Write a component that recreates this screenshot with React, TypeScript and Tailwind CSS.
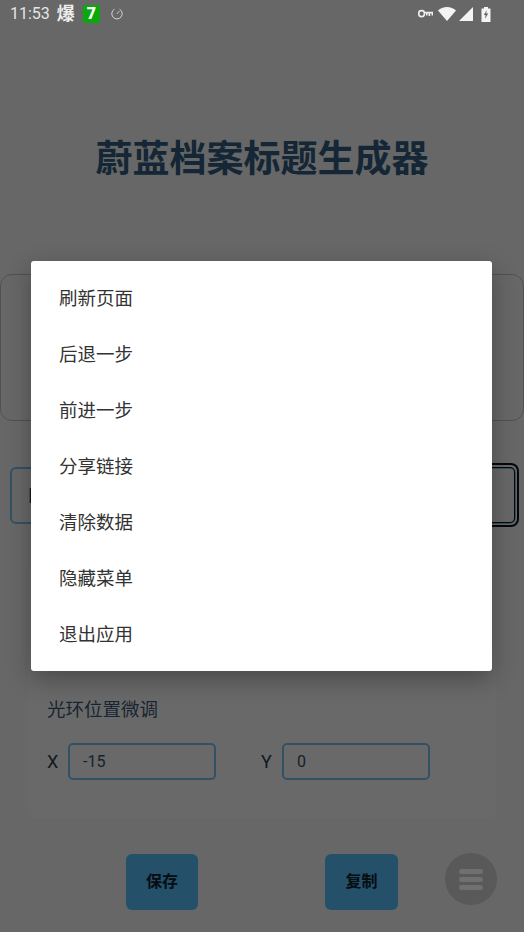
const menuItems = ['刷新页面', '后退一步', '前进一步', '分享链接', '清除数据', '隐藏菜单', '退出应用']

const cjk = "font-['Roboto','Noto_Sans_CJK_SC',sans-serif]"

function StatusBar() {
  return (
    <div className="absolute left-0 top-0 z-20 flex h-[28px] w-full items-center justify-between pl-[10px] pr-[33px] text-[#e4e4e4]">
      <div className="flex items-center">
        <span className="text-[16px] leading-none">11:53</span>
        <span className="ml-[7px] text-[18px] font-bold leading-none text-[#eeeeee]">爆</span>
        <span className="ml-[8px] flex h-[18px] w-[17px] items-center justify-center rounded-[2px] bg-[#0aa80a] text-[16px] font-black leading-none text-white">
          7
        </span>
        <svg className="ml-[11px]" width="12" height="12" viewBox="0 0 12 12" fill="none" stroke="#d4d4d4" strokeWidth="1">
          <path d="M8.6 1.2A5.2 5.2 0 1 1 3.4 1.2" />
          <path d="M6 5.8 8.2 3.2" />
        </svg>
      </div>
      <div className="flex items-center">
        <svg width="15" height="10" viewBox="0 0 15 10" fill="none" stroke="#eeeeee" strokeWidth="1.6">
          <rect x="0.8" y="1.6" width="5.6" height="6" rx="2.6" />
          <path d="M6.4 3.6H14.4V6.4M11.4 3.6V7M8.8 3.6V6.4" />
        </svg>
        <svg className="ml-[5px]" width="18" height="14" viewBox="0 0 18 14" fill="#f4f4f4">
          <path d="M0 3.6C2.4 1.4 5.5 0 9 0s6.6 1.4 9 3.6L9 14Z" />
        </svg>
        <svg className="ml-[3px]" width="14" height="14" viewBox="0 0 14 14" fill="#f4f4f4">
          <path d="M14 0V14H0Z" />
        </svg>
        <svg className="ml-[8px]" width="10" height="15" viewBox="0 0 10 15" fill="#f4f4f4">
          <path d="M3 0H7V1.5H9.5V15H.5V1.5H3Z" />
          <path d="M5.8 3 2.8 8H4.6L4 12 7.2 6.6H5.2Z" fill="#666666" />
        </svg>
      </div>
    </div>
  )
}

function OffsetField({ label, value }: { label: string; value: string }) {
  return (
    <div className="flex items-center">
      <span className="w-[21px] text-[18px] text-[#2c3e50]">{label}</span>
      <div className="flex h-[37px] w-[148px] items-center rounded-[5px] border-2 border-[#7cc4f4] px-[13px] text-[16px] text-[#3a5068]">
        {value}
      </div>
    </div>
  )
}

export default function App() {
  return (
    <div className={`relative h-[932px] w-[524px] overflow-hidden bg-[#f8fbf8] ${cjk}`}>
      <div className="flex h-full flex-col pt-[28px]">
        <h1 className="mt-[108px] text-center text-[37px] font-bold leading-[48px] text-[#345c84]">蔚蓝档案标题生成器</h1>
        <div className="mt-[90px] h-[147px] rounded-[12px] border border-[#c4c4c4]" />
        <div className="relative ml-[10px] mr-[8px] mt-[46px] flex h-[57px] items-center rounded-[6px] border-2 border-[#7cc4f4] pl-[16px] text-[20px] text-[#2c3e50]">
          Blue Archive
          {/* focus ring, only shows on the right of the dialog */}
          <div className="absolute -bottom-[5px] -right-[5px] -top-[6px] left-[300px] rounded-r-[8px] border-2 border-l-0 border-[#111111] p-[2px] pl-0">
            <div className="h-full rounded-r-[5px] border border-l-0 border-[#111111]" />
          </div>
        </div>
        <div className="mx-[28px] mt-[39px] flex h-[255px] flex-col justify-end rounded-[8px] bg-white pb-[38px] pl-[19px]">
          <p className="mb-[20px] text-[18.5px] leading-[26px] text-[#3d5a78]">光环位置微调</p>
          <div className="flex gap-[45px]">
            <OffsetField label="X" value="-15" />
            <OffsetField label="Y" value="0" />
          </div>
        </div>
        <div className="relative mt-[36px] flex pl-[126px]">
          <button className="flex h-[56px] w-[72px] items-center justify-center rounded-[6px] bg-[#57c4ff] text-[16px] font-bold text-[#102030]">
            保存
          </button>
          <button className="ml-[127px] flex h-[56px] w-[73px] items-center justify-center rounded-[6px] bg-[#57c4ff] text-[16px] font-bold text-[#102030]">
            复制
          </button>
        </div>
      </div>

      {/* scrim + menu dialog */}
      <div className="absolute inset-0 z-10 bg-black/[0.59]" />
      <div className="absolute left-[31px] top-[261px] z-10 w-[461px] rounded-[3px] bg-white py-[9px] shadow-[0_8px_24px_rgba(0,0,0,0.3)]">
        {menuItems.map((item) => (
          <div key={item} className="flex h-[56px] items-center px-[28px] pt-[4px] text-[18.5px] text-[#333333]">
            {item}
          </div>
        ))}
      </div>

      <StatusBar />

      {/* floating menu button */}
      <div className="absolute left-[445px] top-[853px] z-20 flex h-[52px] w-[52px] flex-col items-center justify-center gap-[3px] rounded-full bg-[#595959]">
        <span className="h-[5px] w-[24px] rounded-full bg-[#707070]" />
        <span className="h-[5px] w-[24px] rounded-full bg-[#707070]" />
        <span className="h-[5px] w-[24px] rounded-full bg-[#707070]" />
      </div>
    </div>
  )
}
